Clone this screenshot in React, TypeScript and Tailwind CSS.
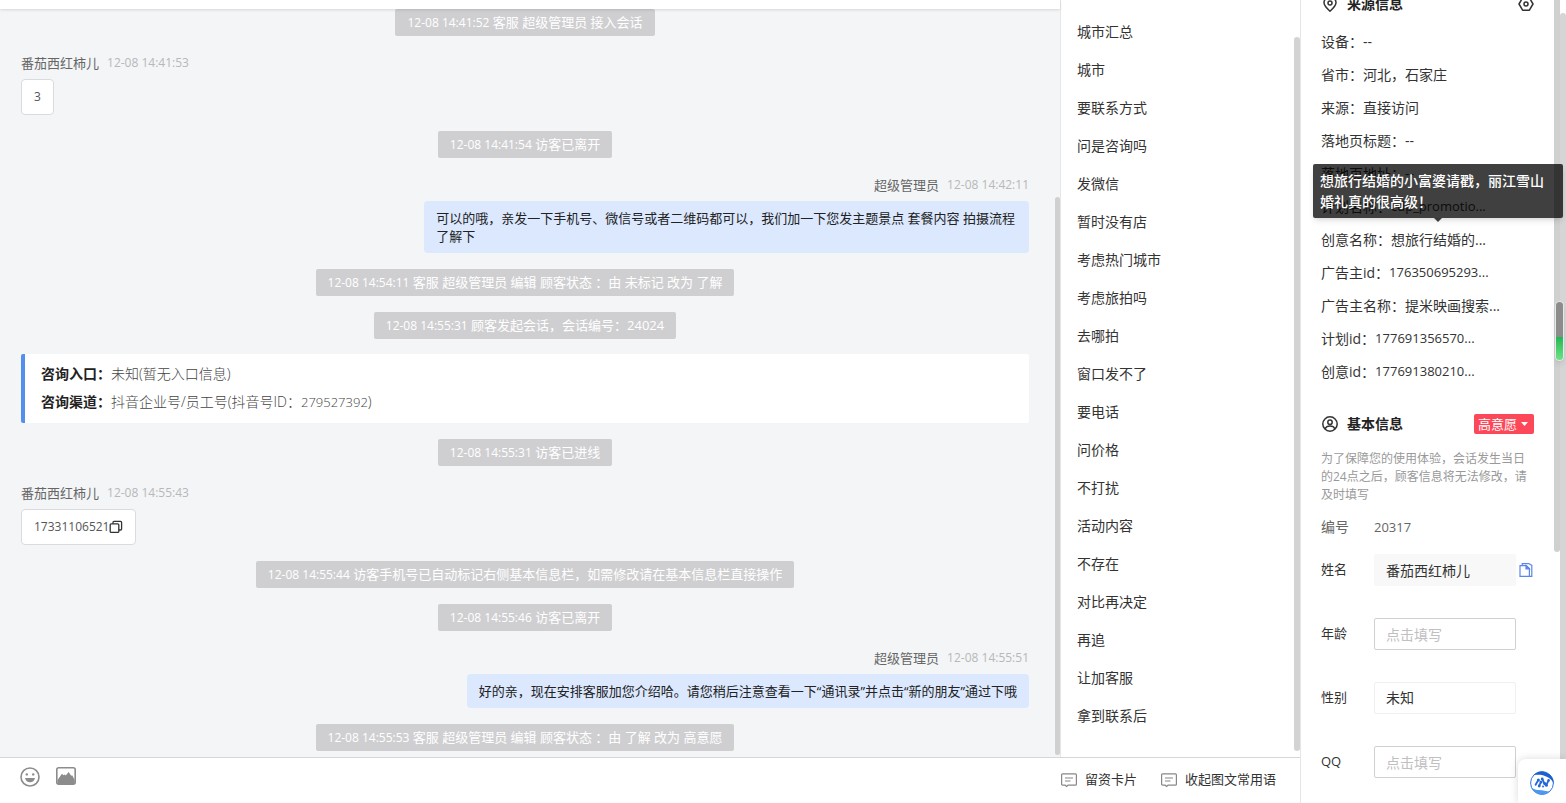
import { useState } from "react";

type Message =
  | { type: "system"; time: string; text: string }
  | { type: "visitor"; name: string; time: string; text: string; phone?: boolean }
  | { type: "agent"; name: string; time: string; text: string }
  | { type: "card"; entry: string; channel: string; accountId: string };

const messages: Message[] = [
  { type: "system", time: "12-08 14:41:52", text: "客服 超级管理员 接入会话" },
  { type: "visitor", name: "番茄西红柿儿", time: "12-08 14:41:53", text: "3" },
  { type: "system", time: "12-08 14:41:54", text: "访客已离开" },
  {
    type: "agent",
    name: "超级管理员",
    time: "12-08 14:42:11",
    text: "可以的哦，亲发一下手机号、微信号或者二维码都可以，我们加一下您发主题景点 套餐内容 拍摄流程了解下",
  },
  { type: "system", time: "12-08 14:54:11", text: "客服 超级管理员 编辑 顾客状态 ：由 未标记 改为 了解" },
  { type: "system", time: "12-08 14:55:31", text: "顾客发起会话，会话编号：24024" },
  { type: "card", entry: "未知(暂无入口信息)", channel: "抖音企业号/员工号", accountId: "279527392" },
  { type: "system", time: "12-08 14:55:31", text: "访客已进线" },
  { type: "visitor", name: "番茄西红柿儿", time: "12-08 14:55:43", text: "17331106521", phone: true },
  { type: "system", time: "12-08 14:55:44", text: "访客手机号已自动标记右侧基本信息栏，如需修改请在基本信息栏直接操作" },
  { type: "system", time: "12-08 14:55:46", text: "访客已离开" },
  {
    type: "agent",
    name: "超级管理员",
    time: "12-08 14:55:51",
    text: "好的亲，现在安排客服加您介绍哈。请您稍后注意查看一下“通讯录”并点击“新的朋友”通过下哦",
  },
  { type: "system", time: "12-08 14:55:53", text: "客服 超级管理员 编辑 顾客状态 ：由 了解 改为 高意愿" },
];

const quickReplies = [
  "城市汇总",
  "城市",
  "要联系方式",
  "问是咨询吗",
  "发微信",
  "暂时没有店",
  "考虑热门城市",
  "考虑旅拍吗",
  "去哪拍",
  "窗口发不了",
  "要电话",
  "问价格",
  "不打扰",
  "活动内容",
  "不存在",
  "对比再决定",
  "再追",
  "让加客服",
  "拿到联系后",
];

const sourceInfo = [
  { label: "设备：", value: "--" },
  { label: "省市：", value: "河北，石家庄" },
  { label: "来源：", value: "直接访问" },
  { label: "落地页标题：", value: "--" },
  { label: "落地页地址：", value: "--" },
  { label: "计划名称：", value: "cdp_promotio...", numeric: true },
  { label: "创意名称：", value: "想旅行结婚的...", tip: "想旅行结婚的小富婆请戳，丽江雪山婚礼真的很高级！" },
  { label: "广告主id：", value: "176350695293...", numeric: true },
  { label: "广告主名称：", value: "提米映画搜索..." },
  { label: "计划id：", value: "177691356570...", numeric: true },
  { label: "创意id：", value: "177691380210...", numeric: true },
];

function PinIcon() {
  return (
    <svg className="h-4 w-4" viewBox="0 0 16 16" fill="none" stroke="#333" strokeWidth="1.5">
      <path d="M8 15.2C4.6 12.2 2 9.600 2 6.800a6 6 0 0 1 12 0c0 2.800-2.600 5.400-6 8.400Z" />
      <circle cx="8" cy="7" r="2" />
    </svg>
  );
}

function NutIcon() {
  return (
    <svg className="h-4 w-4" viewBox="0 0 16 16" fill="none" stroke="#333" strokeWidth="1.5" strokeLinejoin="round">
      <path d="M4.600 1.800h6.800L15 8l-3.600 6.200H4.600L1 8Z" />
      <circle cx="8" cy="8" r="2" />
    </svg>
  );
}

function UserIcon() {
  return (
    <svg className="h-4 w-4" viewBox="0 0 16 16" fill="none" stroke="#333" strokeWidth="1.5">
      <circle cx="8" cy="8" r="7.200" />
      <circle cx="8" cy="6.200" r="2.200" />
      <path d="M3 13c.9-2 2.800-2.900 5-2.900s4.100.9 5 2.900" />
    </svg>
  );
}

function CopyIcon() {
  return (
    <svg className="h-[14px] w-[14px]" viewBox="0 0 14 14" fill="none" stroke="#333" strokeWidth="1.300">
      <rect x="1.200" y="3.800" width="8.600" height="8.600" rx="1" />
      <path d="M4 3.800V2.400a1 1 0 0 1 1-1h6.600a1 1 0 0 1 1 1V9a1 1 0 0 1-1 1H9.800" />
    </svg>
  );
}

function CopyDocIcon() {
  return (
    <svg className="h-4 w-[14px]" viewBox="0 0 14 16" fill="none" stroke="#5b87e8" strokeWidth="1.200">
      <path d="M1 3.600h6.400l3 3v7.800H1Z" />
      <path d="M7 3.600v3.200h3.400Z" fill="#5b87e8" />
      <path d="M3.200 3.400V1.600h6.600l3 1.800v11h-2.200" />
    </svg>
  );
}

function SmileIcon() {
  return (
    <svg className="h-5 w-5" viewBox="0 0 20 20">
      <circle cx="10" cy="10" r="9" fill="none" stroke="#8c8c8c" strokeWidth="1.600" />
      <circle cx="6.800" cy="7.400" r="1.200" fill="#8c8c8c" />
      <circle cx="13.200" cy="7.400" r="1.200" fill="#8c8c8c" />
      <path d="M5 11h10c-.5 2.700-2.500 4.300-5 4.300S5.500 13.700 5 11Z" fill="#8c8c8c" />
    </svg>
  );
}

function PictureIcon() {
  return (
    <svg className="h-5 w-5" viewBox="0 0 20 20">
      <rect x=".8" y=".8" width="18.400" height="16.400" rx="2" fill="none" stroke="#8c8c8c" strokeWidth="1.600" />
      <path d="M1.500 13 6 6.700l1.600 1.600 1.200-.9 1 1L12.600 5l2.600 3.800 1-.5 2.500 4.700v4H1.500Z" fill="#8c8c8c" />
    </svg>
  );
}

function NoteIcon() {
  return (
    <svg className="h-4 w-4" viewBox="0 0 16 16" fill="none" stroke="#888" strokeWidth="1.200">
      <path d="M1.600 1.800h12.800a1 1 0 0 1 1 1v9.400a1 1 0 0 1-1 1H7L5.600 14.400 4.200 13.200H1.600a1 1 0 0 1-1-1V2.800a1 1 0 0 1 1-1Z" />
      <path d="M4 6h8M4 9h5.500" />
    </svg>
  );
}

function HelperLogo() {
  return (
    <svg className="h-6 w-6" viewBox="0 0 24 24">
      <circle cx="12" cy="12" r="11.400" fill="#fff" stroke="#2f74e0" strokeWidth="1" />
      <path d="M3.500 4.300A11.800 11.800 0 0 1 23.700 13C22.500 9 19.500 6.800 15.500 5.200 11.500 3.600 7.300 3.600 3.500 4.300Z" fill="#1b5fd0" />
      <path d="M.5 14.500c1.500 3.300 4.500 4.200 8 4.600 4.300.5 8 .9 11.300 1.600A11.800 11.800 0 0 1 .5 14.500Z" fill="#4a98f0" />
      <g stroke="#2468d8" strokeWidth="1.800" strokeLinecap="round" fill="none">
        <path d="M5.600 13.800 8.200 9.200M9.300 14.600l1.500-3.400M12.400 8.200l2.200 4.600M16.600 13.600l1.800-4" />
      </g>
      <g fill="#2468d8">
        <circle cx="8.400" cy="9" r="1.500" />
        <circle cx="11" cy="11" r="1.500" />
        <circle cx="9.200" cy="15" r="1.400" />
        <circle cx="12.200" cy="8" r="1.400" />
        <circle cx="14.800" cy="12.600" r="1.600" />
        <circle cx="16.400" cy="14.200" r="1.500" />
        <circle cx="18.600" cy="9.400" r="1.300" />
        <circle cx="13" cy="15.600" r="1" />
      </g>
    </svg>
  );
}

function Sender({ name, time }: { name: string; time: string }) {
  return (
    <div className="mb-[5px] flex gap-2 text-[13px] leading-[22px]">
      <span className="text-[#666]">{name}</span>
      <span className="text-xs leading-[22px] text-[#b8b8b8]">{time}</span>
    </div>
  );
}

function MessageRow({ message }: { message: Message }) {
  if (message.type === "system") {
    return (
      <div className="self-center rounded-xs bg-[#cfcfd1] px-3 text-[13px] leading-[27px] text-white">
        <span className="text-xs leading-[27px]">{message.time}</span> {message.text}
      </div>
    );
  }

  if (message.type === "card") {
    return (
      <div className="-mt-px rounded-xs border-l-4 border-[#5390ee] bg-white px-4 pt-1.5 pb-[7px] text-sm leading-7 font-light text-[#444]">
        <div>
          <span className="font-bold text-[#222]">咨询入口：</span>
          {message.entry}
        </div>
        <div>
          <span className="font-bold text-[#222]">咨询渠道：</span>
          {message.channel}(抖音号ID：<span className="text-[13px]">{message.accountId}</span>)
        </div>
      </div>
    );
  }

  if (message.type === "visitor") {
    return (
      <div className="flex flex-col items-start">
        <Sender name={message.name} time={message.time} />
        <div className="flex items-center rounded border border-[#d9dbde] bg-white px-3 text-xs leading-[34px] text-[#555]">
          {message.text}
          {message.phone && (
            <button type="button" aria-label="复制">
              <CopyIcon />
            </button>
          )}
        </div>
      </div>
    );
  }

  return (
    <div className="flex flex-col items-end">
      <Sender name={message.name} time={message.time} />
      <div className="max-w-[60%] rounded bg-[#dbe8fe] px-3 py-2 text-[13px] leading-[18px] text-[#222]">
        {message.text}
      </div>
    </div>
  );
}

function SourceInfo() {
  return (
    <section>
      <div className="-mt-2 flex h-6 items-center justify-between">
        <h2 className="flex items-center gap-[9px] pl-px text-sm font-bold text-[#222]">
          <PinIcon />
          来源信息
        </h2>
        <button type="button" aria-label="设置">
          <NutIcon />
        </button>
      </div>
      <ul className="mt-[9px] text-sm text-[#333]">
        {sourceInfo.map((item) => (
          <li key={item.label} className="relative flex h-[33px] items-center whitespace-nowrap">
            <span>{item.label}</span>
            <span className={item.numeric ? "text-[13px]" : ""}>{item.value}</span>
            {item.tip && (
              <div
                role="tooltip"
                className="absolute bottom-full -left-2 z-10 mb-[5px] w-[250px] rounded-xs bg-black/75 px-[7px] py-1.5 leading-[21px] font-medium whitespace-normal text-white shadow-md"
              >
                {item.tip}
                <div className="absolute top-full left-1/2 -ml-1 border-x-4 border-t-4 border-x-transparent border-t-black/75" />
              </div>
            )}
          </li>
        ))}
      </ul>
    </section>
  );
}

function BasicInfo() {
  const [age, setAge] = useState("");
  const [qq, setQq] = useState("");

  const field = "h-8 w-[142px] rounded-xs border px-[11px] text-sm text-[#333] placeholder:text-[#c0c0c0]";

  return (
    <section className="mt-6">
      <div className="flex h-6 items-center justify-between">
        <h2 className="flex items-center gap-[9px] pl-px text-sm font-bold text-[#222]">
          <UserIcon />
          基本信息
        </h2>
        <button
          type="button"
          className="flex h-5 items-center gap-1 rounded-xs bg-[#fc4858] px-1 text-[13px] leading-5 whitespace-nowrap text-white"
        >
          高意愿
          <svg className="mr-0.5 h-1 w-[7px]" viewBox="0 0 7 4" fill="#fff">
            <path d="M0 0h7L3.500 4Z" />
          </svg>
        </button>
      </div>
      <p className="mt-[14px] text-xs leading-[18px] text-[#999]">
        为了保障您的使用体验，会话发生当日的24点之后，顾客信息将无法修改，请及时填写
      </p>

      <div className="mt-[11px] flex h-6 items-center text-sm text-[#666]">
        <span className="w-[53px]">编号</span>
        <span className="text-[13px]">20317</span>
      </div>

      <div className="mt-[15px] flex flex-col gap-8 text-[13px] text-[#333]">
        <div className="flex items-center">
          <label htmlFor="name" className="w-[53px]">姓名</label>
          <input id="name" readOnly value="番茄西红柿儿" className={`${field} border-[#f8f8f8] bg-[#f8f8f8]`} />
          <button type="button" aria-label="复制姓名" className="ml-[3px]">
            <CopyDocIcon />
          </button>
        </div>
        <div className="flex items-center">
          <label htmlFor="age" className="w-[53px]">年龄</label>
          <input
            id="age"
            value={age}
            onChange={(e) => setAge(e.target.value)}
            placeholder="点击填写"
            className={`${field} border-[#d0d0d0]`}
          />
        </div>
        <div className="flex items-center">
          <label htmlFor="gender" className="w-[53px]">性别</label>
          <select id="gender" defaultValue="未知" className={`${field} appearance-none border-[#f0f0f0] bg-white`}>
            <option>未知</option>
            <option>男</option>
            <option>女</option>
          </select>
        </div>
        <div className="flex items-center">
          <label htmlFor="qq" className="w-[53px]">QQ</label>
          <input
            id="qq"
            value={qq}
            onChange={(e) => setQq(e.target.value)}
            placeholder="点击填写"
            className={`${field} border-[#d0d0d0]`}
          />
        </div>
      </div>
    </section>
  );
}

export default function App() {
  return (
    <div
      lang="zh-CN"
      className="flex h-screen overflow-hidden bg-white font-['Open_Sans','Noto_Sans_CJK_SC',sans-serif]"
    >
      <div className="flex min-w-0 flex-1 flex-col">
        <div className="flex min-h-0 flex-1">
          {/* Conversation */}
          <main className="flex min-w-0 flex-1 flex-col">
            <div className="z-10 h-[9px] shrink-0 bg-white shadow-[0_1px_3px_rgba(0,0,0,0.12)]" />
            <div className="flex min-h-0 flex-1 bg-[#f3f5f7]">
              <div className="flex min-w-0 flex-1 flex-col gap-4 overflow-hidden pr-[26px] pl-[21px]">
                {messages.map((message, i) => (
                  <MessageRow key={i} message={message} />
                ))}
              </div>
              <div className="flex w-[5px] flex-col pt-[188px] pb-0.5">
                <div className="flex-1 rounded-full bg-[#d0d0d0]" />
              </div>
            </div>
          </main>

          {/* Quick replies */}
          <nav className="flex w-60 shrink-0 border-l border-[#e6e6e6]">
            <ul className="flex-1 overflow-hidden pt-[13px] pl-4 text-sm text-[#333]">
              {quickReplies.map((reply) => (
                <li key={reply} className="h-[38px]">
                  <button type="button" className="h-full">
                    {reply}
                  </button>
                </li>
              ))}
            </ul>
            <div className="flex w-1.5 flex-col pt-[37px] pb-1.5">
              <div className="flex-1 rounded-full bg-[#d3d3d3]" />
            </div>
          </nav>
        </div>

        {/* Composer toolbar */}
        <footer className="flex h-[46px] shrink-0 items-center justify-between border-t border-[#d6d6d6] pr-6 pb-0.5 pl-5">
          <div className="flex gap-4 pb-1.5">
            <button type="button" aria-label="表情">
              <SmileIcon />
            </button>
            <button type="button" aria-label="图片">
              <PictureIcon />
            </button>
          </div>
          <div className="flex gap-6 text-[13px] text-[#333]">
            <button type="button" className="flex items-center gap-2">
              <NoteIcon />
              留资卡片
            </button>
            <button type="button" className="flex items-center gap-2">
              <NoteIcon />
              收起图文常用语
            </button>
          </div>
        </footer>
      </div>

      {/* Customer panel */}
      <aside className="flex w-[266px] shrink-0 border-l border-[#e6e6e6]">
        <div className="min-w-0 flex-1 px-5">
          <SourceInfo />
          <BasicInfo />
        </div>
        <div className="w-1.5 pb-[251px]">
          <div className="h-full rounded-b-full bg-[#d0d0d0]" />
        </div>
        <div className="w-1.5 pt-[13px]">
          <div className="h-full rounded-t-full bg-[#d5d5d5]" />
        </div>
      </aside>

      {/* Floating meter and helper */}
      <div className="fixed top-[301px] right-0.5 flex h-[60px] w-[9px] flex-col overflow-hidden rounded-full border border-[#e8e8e8] shadow-md">
        <div className="flex-[3] bg-[#8c8c8c]" />
        <div className="flex-[2] bg-linear-to-b from-[#1fb655] to-[#6be384]" />
      </div>
      <button
        type="button"
        aria-label="助手"
        className="fixed right-0 bottom-0 flex h-11 w-12 items-center justify-center rounded-tl-lg bg-white pt-1 shadow-[0_0_8px_rgba(0,0,0,0.15)]"
      >
        <HelperLogo />
      </button>
    </div>
  );
}
